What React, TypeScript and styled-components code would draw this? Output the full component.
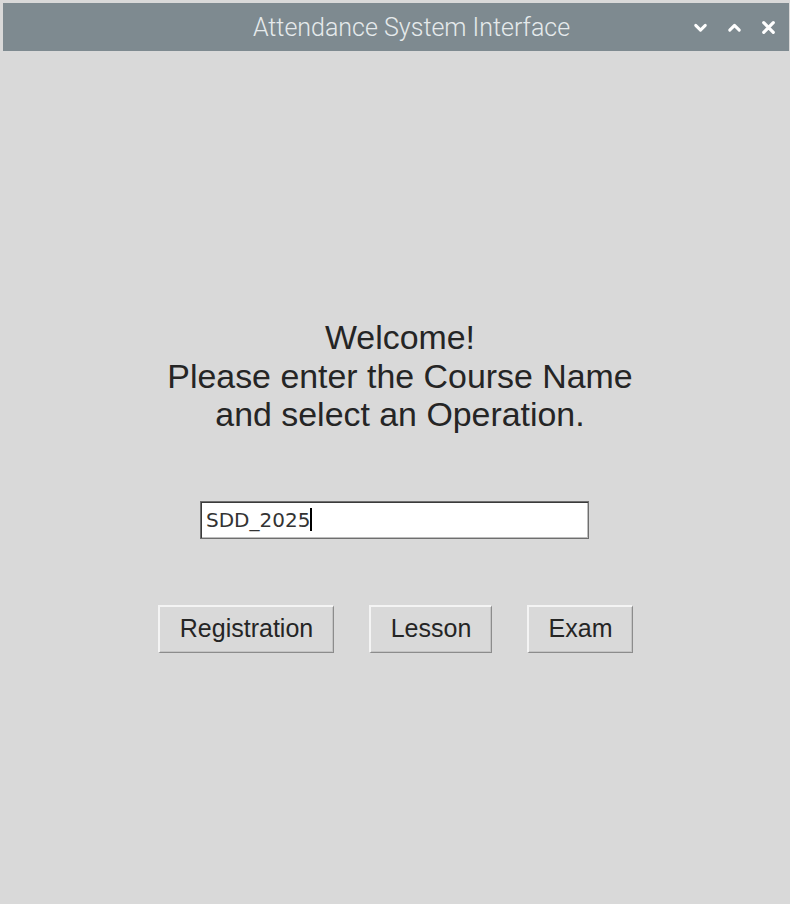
import React from "react";
import styled, { createGlobalStyle } from "styled-components";

const Global = createGlobalStyle`
  html, body {
    margin: 0;
    padding: 0;
    background: #d9d9d9;
    width: 790px;
    height: 904px;
    overflow: hidden;
  }
  * { box-sizing: border-box; }
`;

const Frame = styled.div`
  width: 790px;
  height: 904px;
  background: #d9d9d9;
  display: flex;
  flex-direction: column;
  padding: 3px 1px 0 3px;
`;

const TitleBar = styled.div`
  height: 48px;
  background: #7e8a90;
  display: flex;
  align-items: center;
`;

const TitleText = styled.div`
  flex: 1;
  text-align: center;
  padding-left: 128px;
  font-family: Roboto, "Liberation Sans", sans-serif;
  font-weight: 300;
  font-size: 25px;
  color: #e6eaec;
`;

const Controls = styled.div`
  display: flex;
  align-items: center;
  gap: 17px;
  padding-right: 12px;
`;

const CtlIcon = styled.svg`
  width: 17px;
  height: 17px;
  display: block;
`;

const Body = styled.div`
  flex: 1;
  display: flex;
  flex-direction: column;
  align-items: center;
  padding-top: 267px;
`;

const Heading = styled.div`
  font-family: "Liberation Sans", Arial, sans-serif;
  font-size: 33.9px;
  line-height: 38.5px;
  color: #252525;
  text-align: center;
  padding-left: 8px;
`;

const Entry = styled.div`
  margin-top: 67px;
  margin-right: 3px;
  width: 389px;
  height: 38px;
  background: #ffffff;
  border: 1px solid #6e6e6e;
  box-shadow: inset 1px 1px 0 #3a3a3a, inset -1px -1px 0 #bdbdbd;
  display: flex;
  align-items: center;
  padding-left: 5px;
  font-family: "DejaVu Sans", sans-serif;
  font-size: 20px;
  color: #333333;
`;

const Caret = styled.span`
  display: inline-block;
  width: 2px;
  height: 23px;
  background: #000000;
`;

const ButtonRow = styled.div`
  margin-top: 66px;
  display: flex;
  gap: 35px;
  padding-right: 1px;
`;

const Btn = styled.div<{ $w: number }>`
  width: ${(p) => p.$w}px;
  height: 48px;
  background: #d9d9d9;
  border-top: 2px solid #f4f4f4;
  border-left: 2px solid #f4f4f4;
  border-right: 1px solid #8c8c8c;
  border-bottom: 1px solid #8c8c8c;
  box-shadow: inset -1px -1px 0 #c4c4c4;
  display: flex;
  align-items: center;
  justify-content: center;
  font-family: "Liberation Sans", Arial, sans-serif;
  font-size: 25px;
  color: #252525;
  padding-bottom: 2px;
`;

export default function App() {
  return (
    <>
      <Global />
      <Frame>
        <TitleBar>
          <TitleText>Attendance System Interface</TitleText>
          <Controls>
            <CtlIcon viewBox="0 0 16 16">
              <path d="M3.5 6 L8 10.5 L12.5 6" stroke="#ffffff" strokeWidth="2.8" fill="none" strokeLinecap="round" strokeLinejoin="round" />
            </CtlIcon>
            <CtlIcon viewBox="0 0 16 16">
              <path d="M3.5 10.5 L8 6 L12.5 10.5" stroke="#ffffff" strokeWidth="2.8" fill="none" strokeLinecap="round" strokeLinejoin="round" />
            </CtlIcon>
            <CtlIcon viewBox="0 0 16 16">
              <path d="M3.5 3.5 L12.5 12.5 M12.5 3.5 L3.5 12.5" stroke="#ffffff" strokeWidth="3" fill="none" strokeLinecap="round" />
            </CtlIcon>
          </Controls>
        </TitleBar>
        <Body>
          <Heading>
            Welcome!
            <br />
            Please enter the Course Name
            <br />
            and select an Operation.
          </Heading>
          <Entry>
            SDD_2025
            <Caret />
          </Entry>
          <ButtonRow>
            <Btn $w={176}>Registration</Btn>
            <Btn $w={123}>Lesson</Btn>
            <Btn $w={106}>Exam</Btn>
          </ButtonRow>
        </Body>
      </Frame>
    </>
  );
}
